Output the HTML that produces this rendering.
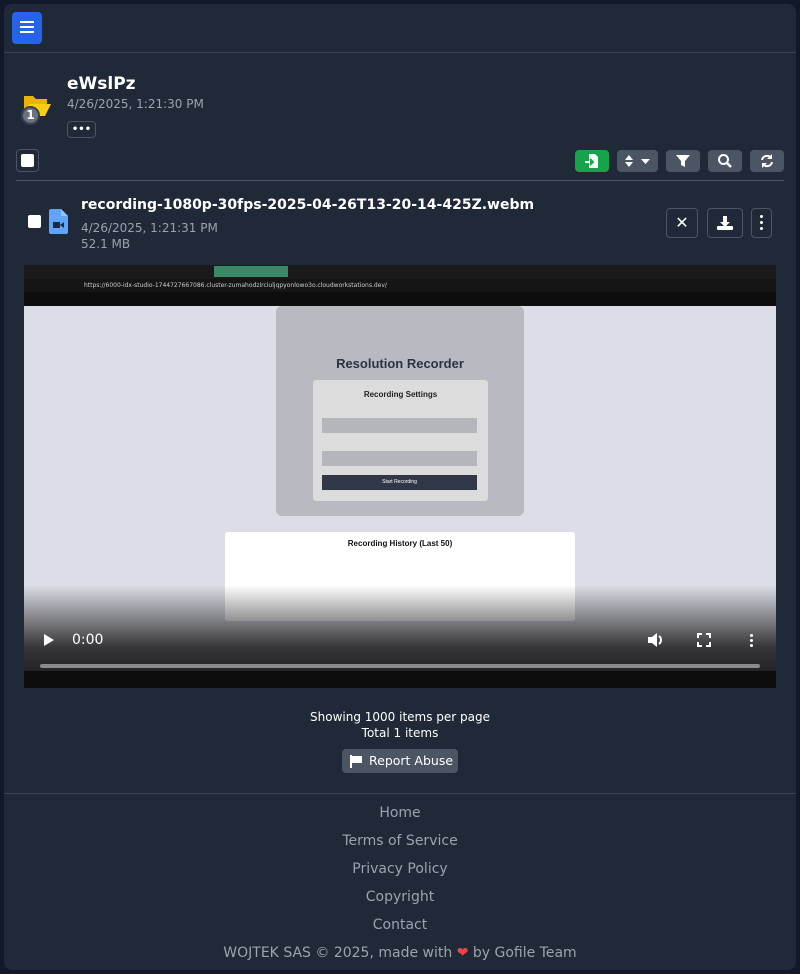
<!DOCTYPE html><html><head><meta charset="utf-8"><style>
*{box-sizing:border-box;margin:0;padding:0}
body{width:800px;height:974px;background:#111827;font-family:"DejaVu Sans","Liberation Sans",sans-serif;position:relative;overflow:hidden;color:#fff}
.card{position:absolute;left:4px;top:4px;width:792px;height:966px;background:#1f2937;border-radius:8px}
.a{position:absolute}
.btn{position:absolute;background:#4b5563;border-radius:4px}
.ob{position:absolute;border:1px solid #4b5563;border-radius:4px}
.cb{position:absolute;width:13px;height:13px;background:#fff;border-radius:2px}
.ft{position:absolute;left:0;width:800px;text-align:center;color:#9ca3af;font-size:14px}
</style></head><body>
<div class="card"></div>
<div class="a" style="left:12px;top:12px;width:30px;height:32px;background:#2563eb;border-radius:4px"></div>
<div class="a" style="left:20px;top:21px;width:14px;height:2px;background:#fff;box-shadow:0 5px 0 #fff,0 10px 0 #fff"></div>
<div class="a" style="left:4px;top:52px;width:792px;height:1px;background:#374151"></div>
<svg class="a" style="left:23px;top:93px" width="29" height="24" viewBox="0 0 29 24"><path d="M1 3h9l3 3h11v5H7L1 20z" fill="#eab308"/><path d="M6 11h22l-6 12H1z" fill="#facc15"/></svg>
<div class="a" style="left:21px;top:106px;width:19px;height:19px;border-radius:50%;background:#6b7280;border:2px solid #374151;font-size:12px;font-weight:bold;text-align:center;line-height:15px">1</div>
<div class="a" style="left:67px;top:74px;font-size:17px;font-weight:bold">eWslPz</div>
<div class="a" style="left:67px;top:97px;font-size:12px;color:#9ca3af">4/26/2025, 1:21:30 PM</div>
<div class="ob" style="left:67px;top:121px;width:29px;height:17px;font-size:10px;text-align:center;line-height:15px;font-weight:bold">•••</div>
<div class="ob" style="left:16px;top:149px;width:23px;height:23px"></div><div class="cb" style="left:21px;top:154px"></div>
<div class="btn" style="left:575px;top:150px;width:34px;height:22px;background:#16a34a"></div>
<svg class="a" style="left:584px;top:153px" width="16" height="16" viewBox="0 0 16 16"><path d="M5 1h6l3 3v11H5z" fill="#fff"/><path d="M1 9h7M6 6l3 3-3 3" stroke="#16a34a" stroke-width="2" fill="none"/><path d="M1 9h5" stroke="#fff" stroke-width="2"/></svg>
<div class="btn" style="left:617px;top:150px;width:41px;height:22px"></div>
<svg class="a" style="left:623px;top:154px" width="30" height="14"><path d="M2 6l4-5 4 5zM2 8l4 5 4-5zM18 5h9l-4.5 5z" fill="#fff"/></svg>
<div class="btn" style="left:666px;top:150px;width:34px;height:22px"></div>
<svg class="a" style="left:675px;top:154px" width="16" height="14"><path d="M1 1h14l-5 6v6l-4-2V7z" fill="#fff"/></svg>
<div class="btn" style="left:708px;top:150px;width:34px;height:22px"></div>
<svg class="a" style="left:717px;top:153px" width="16" height="16"><circle cx="6.5" cy="6.5" r="4.5" stroke="#fff" stroke-width="2" fill="none"/><path d="M10 10l4 4" stroke="#fff" stroke-width="2.5"/></svg>
<div class="btn" style="left:750px;top:150px;width:34px;height:22px"></div>
<svg class="a" style="left:759px;top:153px" width="16" height="16"><path d="M3 7a5 5 0 0 1 9-2M13 9a5 5 0 0 1-9 2" stroke="#fff" stroke-width="2" fill="none"/><path d="M13 1v5H8zM3 15v-5h5z" fill="#fff"/></svg>
<div class="a" style="left:16px;top:180px;width:768px;height:1px;background:#4b5563"></div>
<div class="cb" style="left:28px;top:215px"></div>
<svg class="a" style="left:49px;top:209px" width="19" height="25"><path d="M0 2a2 2 0 0 1 2-2h10l7 7v16a2 2 0 0 1-2 2H2a2 2 0 0 1-2-2z" fill="#60a5fa"/><path d="M12 0v7h7" fill="#93c5fd"/><rect x="4" y="13" width="7" height="6" fill="#1f2937"/><path d="M11 16l4-3v6z" fill="#1f2937"/></svg>
<div class="a" style="left:81px;top:197px;font-size:14px;font-weight:bold">recording-1080p-30fps-2025-04-26T13-20-14-425Z.webm</div>
<div class="a" style="left:81px;top:221px;font-size:12px;color:#9ca3af">4/26/2025, 1:21:31 PM</div>
<div class="a" style="left:81px;top:237px;font-size:12px;color:#9ca3af">52.1 MB</div>
<div class="ob" style="left:666px;top:208px;width:32px;height:30px;text-align:center;line-height:28px;font-size:16px;font-weight:bold">✕</div>
<div class="ob" style="left:707px;top:208px;width:36px;height:30px"></div>
<svg class="a" style="left:716px;top:215px" width="18" height="16"><path d="M7 1h4v6h3l-5 5-5-5h3z" fill="#fff"/><rect x="1" y="11" width="16" height="4" rx="1" fill="#fff"/></svg>
<div class="ob" style="left:751px;top:208px;width:21px;height:30px"></div>
<div class="a" style="left:760px;top:215px;width:3px;height:3px;background:#fff;border-radius:50%;box-shadow:0 6px 0 #fff,0 12px 0 #fff"></div>
<!-- video -->
<div class="a" style="left:24px;top:265px;width:752px;height:423px;background:#dcdde6;overflow:hidden">
 <div class="a" style="left:0;top:0;width:752px;height:41px;background:#0d0d0d"></div>
 <div class="a" style="left:0;top:0;width:752px;height:14px;background:#1a1a1a"></div>
 <div class="a" style="left:190px;top:1px;width:74px;height:11px;background:#3a8a6a"></div>
 <div class="a" style="left:0;top:14px;width:752px;height:13px;background:#151515;font-size:6px;color:#ccc;padding:3px 60px">https://6000-idx-studio-1744727667086.cluster-zumahodzirciuljqpyonlowo3o.cloudworkstations.dev/</div>
 <div class="a" style="left:252px;top:41px;width:248px;height:210px;background:#b8b9c1;border-radius:6px"></div>
 <div class="a" style="left:252px;top:91px;width:248px;text-align:center;font-family:'Liberation Sans';font-size:13px;font-weight:bold;color:#2a3344">Resolution Recorder</div>
 <div class="a" style="left:289px;top:115px;width:175px;height:121px;background:#dcdcdc;border-radius:3px"></div>
 <div class="a" style="left:289px;top:125px;width:175px;text-align:center;font-family:'Liberation Sans';font-size:8px;font-weight:bold;color:#222">Recording Settings</div>
 <div class="a" style="left:298px;top:153px;width:155px;height:15px;background:#b5b6bc"></div>
 <div class="a" style="left:298px;top:186px;width:155px;height:15px;background:#b5b6bc"></div>
 <div class="a" style="left:298px;top:210px;width:155px;height:15px;background:#303848;color:#fff;font-size:5px;text-align:center;line-height:15px;font-family:'Liberation Sans'">Start Recording</div>
 <div class="a" style="left:201px;top:267px;width:350px;height:89px;background:#fff;border-radius:3px"></div>
 <div class="a" style="left:201px;top:274px;width:350px;text-align:center;font-family:'Liberation Sans';font-size:8px;font-weight:bold;color:#111">Recording History (Last 50)</div>
 <div class="a" style="left:0;top:320px;width:752px;height:103px;background:linear-gradient(rgba(0,0,0,0),rgba(0,0,0,.75) 60%,rgba(0,0,0,.9))"></div>
 <svg class="a" style="left:19px;top:368px" width="12" height="14"><path d="M1 1l10 6-10 6z" fill="#fff"/></svg>
 <div class="a" style="left:48px;top:367px;font-size:14px;color:#fff">0:00</div>
 <svg class="a" style="left:623px;top:367px" width="18" height="16"><path d="M1 5h4l5-4v14l-5-4H1z" fill="#fff"/><path d="M12 4a5 5 0 0 1 0 8" stroke="#fff" stroke-width="2" fill="none"/></svg>
 <svg class="a" style="left:673px;top:368px" width="14" height="14"><path d="M1 5V1h4M9 1h4v4M13 9v4H9M5 13H1V9" stroke="#fff" stroke-width="2" fill="none"/></svg>
 <div class="a" style="left:726px;top:369px;width:3px;height:3px;background:#fff;border-radius:50%;box-shadow:0 5px 0 #fff,0 10px 0 #fff"></div>
 <div class="a" style="left:16px;top:399px;width:720px;height:4px;background:#8a8a8a;border-radius:2px"></div>
 <div class="a" style="left:0;top:406px;width:752px;height:17px;background:#0d0d0d"></div>
</div>
<div class="a" style="left:0;top:709px;width:800px;text-align:center;font-size:12px;line-height:16px">Showing 1000 items per page<br>Total 1 items</div>
<div class="btn" style="left:342px;top:749px;width:116px;height:24px;font-size:12.5px;line-height:24px;padding-left:27px">Report Abuse</div>
<svg class="a" style="left:350px;top:755px" width="13" height="13"><path d="M1 0v13" stroke="#fff" stroke-width="2"/><path d="M2 1h10v7H2z" fill="#fff"/></svg>
<div class="a" style="left:4px;top:793px;width:792px;height:1px;background:#374151"></div>
<div class="ft" style="top:805px">Home</div>
<div class="ft" style="top:833px">Terms of Service</div>
<div class="ft" style="top:861px">Privacy Policy</div>
<div class="ft" style="top:889px">Copyright</div>
<div class="ft" style="top:917px">Contact</div>
<div class="ft" style="top:945px">WOJTEK SAS © 2025, made with <span style="color:#ef4444">❤</span> by Gofile Team</div>
</body></html>
